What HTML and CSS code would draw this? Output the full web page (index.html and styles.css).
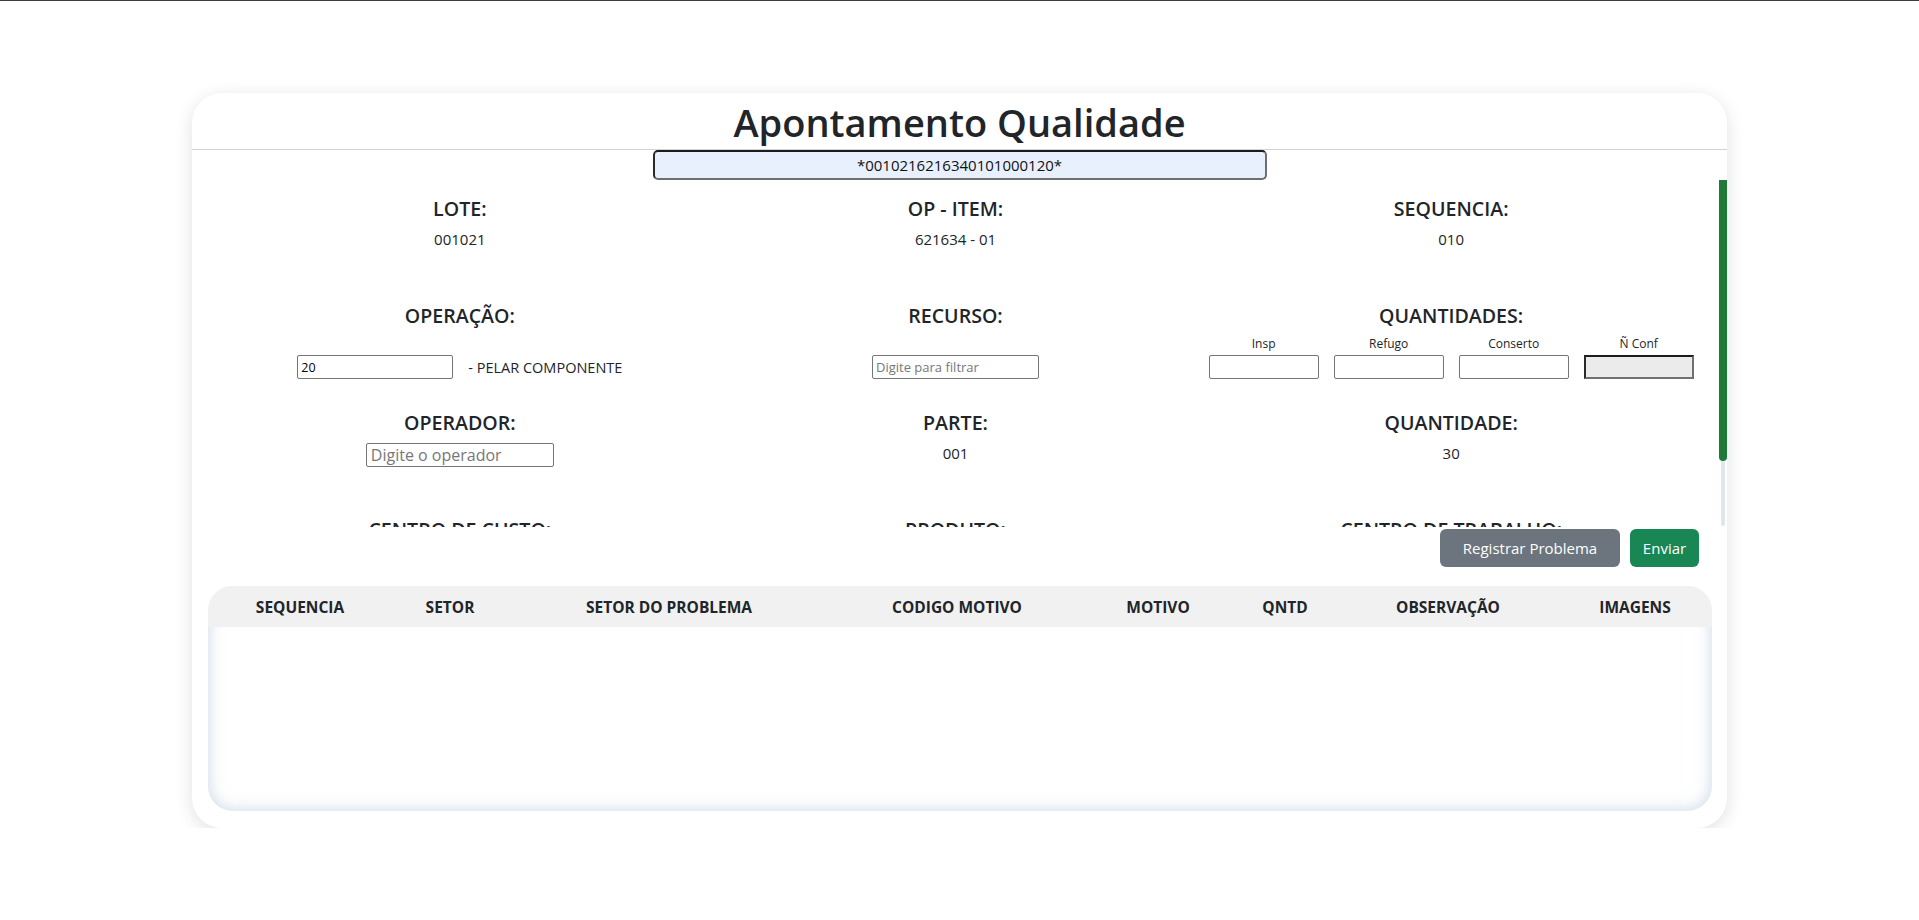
FILE: index.html
```html
<!DOCTYPE html>
<html lang="pt-BR">
<head>
<meta charset="utf-8">
<title>Apontamento Qualidade</title>
<link rel="stylesheet" href="styles.css">
</head>
<body>
<div class="topbar"></div>
<main class="card">
  <header class="card-head">
    <h1 class="title">Apontamento Qualidade</h1>
  </header>
  <div class="barcode-row">
    <input class="barcode" type="text" value="*0010216216340101000120*">
  </div>
  <div class="scroll-wrap">
    <section class="scroll">
      <div class="grid">
        <div class="cell">
          <h5 class="label">LOTE:</h5>
          <div class="value">001021</div>
        </div>
        <div class="cell">
          <h5 class="label">OP - ITEM:</h5>
          <div class="value">621634 - 01</div>
        </div>
        <div class="cell">
          <h5 class="label">SEQUENCIA:</h5>
          <div class="value">010</div>
        </div>

        <div class="cell">
          <h5 class="label">OPERAÇÃO:</h5>
          <div class="inline low wide">
            <input class="inp inp-op" type="text" value="20">
            <span class="op-text">- PELAR COMPONENTE</span>
          </div>
        </div>
        <div class="cell">
          <h5 class="label">RECURSO:</h5>
          <div class="inline low">
            <input class="inp inp-rec" type="text" placeholder="Digite para filtrar">
          </div>
        </div>
        <div class="cell">
          <h5 class="label">QUANTIDADES:</h5>
          <div class="qty">
            <div class="qty-item"><span class="qty-label">Insp</span><input class="inp inp-qty" type="text"></div>
            <div class="qty-item"><span class="qty-label">Refugo</span><input class="inp inp-qty" type="text"></div>
            <div class="qty-item"><span class="qty-label">Conserto</span><input class="inp inp-qty" type="text"></div>
            <div class="qty-item"><span class="qty-label">Ñ Conf</span><input class="inp inp-qty inp-disabled" type="text" disabled></div>
          </div>
        </div>

        <div class="cell">
          <h5 class="label">OPERADOR:</h5>
          <div class="inline">
            <input class="inp inp-oper" type="text" placeholder="Digite o operador">
          </div>
        </div>
        <div class="cell">
          <h5 class="label">PARTE:</h5>
          <div class="value">001</div>
        </div>
        <div class="cell">
          <h5 class="label">QUANTIDADE:</h5>
          <div class="value">30</div>
        </div>

        <div class="cell">
          <h5 class="label">CENTRO DE CUSTO:</h5>
          <div class="value"></div>
        </div>
        <div class="cell">
          <h5 class="label">PRODUTO:</h5>
          <div class="value"></div>
        </div>
        <div class="cell">
          <h5 class="label">CENTRO DE TRABALHO:</h5>
          <div class="value"></div>
        </div>
      </div>
    </section>
    <div class="vbar" aria-hidden="true">
      <div class="vbar-thumb"></div>
      <div class="vbar-track"></div>
    </div>
  </div>
  <div class="actions">
    <button class="btn btn-gray" type="button">Registrar Problema</button>
    <button class="btn btn-green" type="button">Enviar</button>
  </div>
  <div class="table-wrap">
    <table class="tbl">
      <colgroup>
        <col class="c1"><col class="c2"><col class="c3"><col class="c4"><col class="c5"><col class="c6"><col class="c7"><col class="c8">
      </colgroup>
      <thead>
        <tr>
          <th>SEQUENCIA</th>
          <th>SETOR</th>
          <th>SETOR DO PROBLEMA</th>
          <th>CODIGO MOTIVO</th>
          <th>MOTIVO</th>
          <th>QNTD</th>
          <th>OBSERVAÇÃO</th>
          <th>IMAGENS</th>
        </tr>
      </thead>
      <tbody></tbody>
    </table>
  </div>
</main>
</body>
</html>
```

FILE: styles.css
```css
* { box-sizing: border-box; }

html, body {
  margin: 0;
  padding: 0;
  background: #ffffff;
}

body {
  font-family: "Open Sans", "Noto Sans", sans-serif;
  color: #212529;
  font-size: 15px;
}

.topbar {
  height: 1px;
  background: #3a3c42;
}

.card {
  width: 1535px;
  height: 735px;
  margin: 92px auto 0;
  background: #fff;
  border-radius: 30px;
  box-shadow: 0 4px 18px rgba(0, 0, 0, 0.12);
  display: flex;
  flex-direction: column;
  overflow: hidden;
}

.card-head {
  height: 57px;
  border-bottom: 1px solid #d4d4d4;
  display: flex;
  align-items: center;
  justify-content: center;
}

.title {
  margin: 0;
  font-size: 38px;
  font-weight: 600;
  line-height: 48px;
  color: #212529;
  padding-top: 2px;
}

.barcode-row {
  display: flex;
  justify-content: center;
}

.barcode {
  width: 614px;
  height: 30px;
  background: #e8f0fe;
  border: 2px solid #6f6f6f;
  border-top-color: #1c1c1c;
  border-left-color: #2a2a2a;
  border-radius: 5px;
  text-align: center;
  font-family: "Open Sans", sans-serif;
  font-size: 15px;
  color: #111;
  padding: 0;
}

.scroll-wrap {
  display: flex;
  height: 347px;
  flex: none;
}

.scroll {
  flex: 1;
  overflow: hidden;
}

.vbar {
  width: 8px;
  display: flex;
  flex-direction: column;
  align-items: center;
}

.vbar-thumb {
  width: 8px;
  height: 281px;
  background: #1e7a36;
  border-radius: 0 0 4px 4px;
}

.vbar-track {
  width: 4px;
  flex: 1;
  background: #dfe7ea;
  border-radius: 0 0 2px 2px;
  margin-bottom: 1px;
}

.grid {
  display: grid;
  grid-template-columns: repeat(3, 1fr);
  grid-auto-rows: 107px;
  padding: 0 20px;
}

.cell {
  display: flex;
  flex-direction: column;
  align-items: center;
  padding-top: 17px;
}

.label {
  margin: 0 0 8px;
  font-size: 19.6px;
  font-weight: 600;
  line-height: 24px;
  color: #212529;
  white-space: nowrap;
}

.value {
  font-size: 15px;
  line-height: 20px;
  color: #212529;
}

.inline {
  display: flex;
  align-items: center;
  gap: 7px;
}

.inline.wide {
  gap: 15px;
}

.inline.low {
  margin-top: 19px;
}

.op-text {
  font-size: 14.5px;
  color: #212529;
}

.inp {
  height: 24px;
  border: 1px solid #767676;
  border-radius: 2px;
  background: #fff;
  font-family: "Open Sans", sans-serif;
  font-size: 12.5px;
  padding: 1px 3px;
  color: #000;
}

.inp::placeholder {
  color: #777;
}

.inp-op { width: 156px; }
.inp-rec { width: 167px; font-size: 13px; }
.inp-oper { width: 188px; font-size: 16px; padding: 0 4px; }
.inp-qty { width: 110px; }

.inp-disabled {
  background: #ebebeb;
  border: 2px solid #707070;
  border-top-color: #1c1c1c;
  border-left-color: #2a2a2a;
  border-radius: 0;
}

.qty {
  display: flex;
  gap: 15px;
}

.qty-item {
  display: flex;
  flex-direction: column;
  align-items: center;
}

.qty-label {
  font-size: 12px;
  line-height: 16px;
  margin-bottom: 3px;
  color: #212529;
}

.actions {
  display: flex;
  justify-content: flex-end;
  gap: 10px;
  padding: 2px 28px 0 0;
}

.btn {
  height: 38px;
  border: none;
  border-radius: 6px;
  color: #fff;
  font-family: "Open Sans", sans-serif;
  font-size: 15px;
  padding: 0 12px;
}

.btn-gray {
  background: #6c757d;
  width: 180px;
}

.btn-green {
  background: #198754;
  width: 69px;
}

.table-wrap {
  margin: 19px 15px 0 16px;
  height: 225px;
  border-radius: 25px;
  overflow: hidden;
  box-shadow: inset 0 0 16px rgba(150, 175, 205, 0.5);
}

.tbl {
  width: 100%;
  border-collapse: collapse;
  table-layout: fixed;
}

.tbl th {
  background: #f1f1f1;
  height: 41px;
  font-size: 15.5px;
  font-weight: 700;
  color: #212529;
  text-align: center;
  padding: 0;
  white-space: nowrap;
}

.c1 { width: 184px; }
.c2 { width: 116px; }
.c3 { width: 322px; }
.c4 { width: 254px; }
.c5 { width: 148px; }
.c6 { width: 106px; }
.c7 { width: 220px; }
.c8 { width: 154px; }
```
